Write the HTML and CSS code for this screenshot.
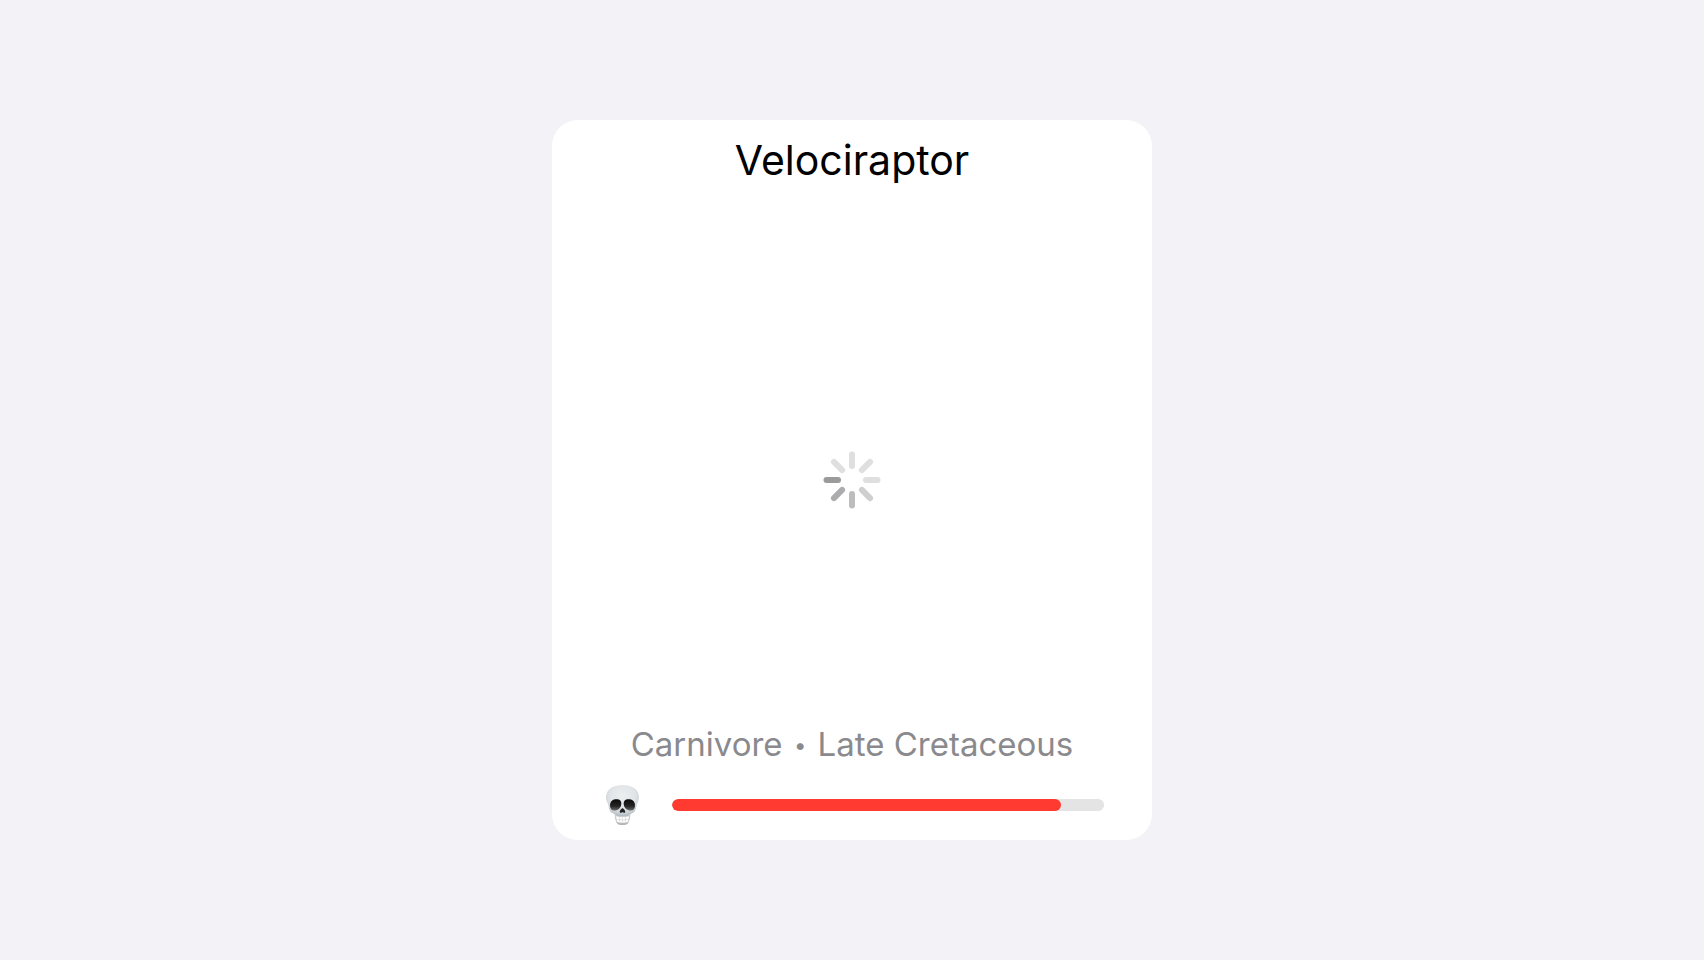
FILE: index.html
```html
<!DOCTYPE html>
<html lang="en">
<head>
<meta charset="utf-8">
<meta name="viewport" content="width=device-width, initial-scale=1">
<title>Velociraptor</title>
<link rel="stylesheet" href="styles.css">
</head>
<body>
<main class="page">
  <article class="card">
    <h1 class="title">Velociraptor</h1>
    <div class="media" role="status" aria-label="Loading">
      <svg class="spinner" viewBox="-30 -30 60 60" aria-hidden="true">
        <g stroke-width="6" stroke-linecap="round">
          <path d="M0-14V-25.500" stroke="#dfdfdf"/>
          <path d="M0-14V-25.500" stroke="#dfdfdf" transform="rotate(45)"/>
          <path d="M0-14V-25.500" stroke="#dfdfdf" transform="rotate(90)"/>
          <path d="M0-14V-25.500" stroke="#cfcfd0" transform="rotate(135)"/>
          <path d="M0-14V-25.500" stroke="#bdbdbe" transform="rotate(180)"/>
          <path d="M0-14V-25.500" stroke="#acacae" transform="rotate(225)"/>
          <path d="M0-14V-25.500" stroke="#9b9b9d" transform="rotate(270)"/>
          <path d="M0-14V-25.500" stroke="#dfdfdf" transform="rotate(315)"/>
        </g>
      </svg>
    </div>
    <p class="facts">Carnivore <span class="dot">•</span> Late Cretaceous</p>
    <div class="danger">
      <svg class="skull" viewBox="0 0 36 42" aria-hidden="true">
        <defs>
          <radialGradient id="bone" cx=".5" cy=".35" r=".68">
            <stop offset="0" stop-color="#eceeef"/>
            <stop offset=".55" stop-color="#e1e5e8"/>
            <stop offset=".82" stop-color="#ccd3d7"/>
            <stop offset="1" stop-color="#a9b3b9"/>
          </radialGradient>
          <linearGradient id="jaw" x1="0" y1="0" x2="0" y2="1">
            <stop offset="0" stop-color="#dcdcdc"/>
            <stop offset="1" stop-color="#b4b4b4"/>
          </linearGradient>
          <linearGradient id="socket" x1="0" y1="0" x2="0" y2="1">
            <stop offset="0" stop-color="#0c0c0c"/>
            <stop offset=".6" stop-color="#242424"/>
            <stop offset="1" stop-color="#686868"/>
          </linearGradient>
        </defs>
        <path d="M10 28C10 32 10.500 35 11.500 37.500C12.500 40.700 15 41 18 41S23.500 40.700 24.500 37.500C25.500 35 26 32 26 28Z" fill="url(#jaw)"/>
        <path d="M18 1C7.500 1 1.500 6 1.500 13.500C1.500 17 3.500 19 4 22C4.500 26 6 28.500 9 29.500C11 30.200 12 32 14 32H22C24 32 25 30.200 27 29.500C30 28.500 31.500 26 32 22C32.500 19 34.500 17 34.500 13.500C34.500 6 28.500 1 18 1Z" fill="url(#bone)"/>
        <path d="M5.500 21.500C5.500 17 8.500 15.200 12 15.200C15.500 15.200 17 17 16.800 20C16.500 24 13.500 26.500 10 26.500C7 26.500 5.500 24.500 5.500 21.500Z" fill="url(#socket)"/>
        <path d="M30.500 21.500C30.500 17 27.500 15.200 24 15.200C20.500 15.200 19 17 19.200 20C19.500 24 22.500 26.500 26 26.500C29 26.500 30.500 24.500 30.500 21.500Z" fill="url(#socket)"/>
        <path d="M18 24.200C17 24.200 14.800 27 15.300 28.300C15.800 29.200 17.200 28.800 18 28.300C18.800 28.800 20.200 29.200 20.700 28.300C21.200 27 19 24.200 18 24.200Z" fill="#222"/>
        <path d="M11.500 32.300Q18 34 24.500 32.300L23.500 38Q18 39.300 12.500 38Z" fill="#fff"/>
        <path d="M12 35.400Q18 36.500 24 35.400M15 33V38M18 33.500V38.500M21 33V38" fill="none" stroke="#c8c8c8" stroke-width=".5"/>
      </svg>
      <progress class="meter" value="90" max="100" aria-label="Danger level"></progress>
    </div>
  </article>
</main>
</body>
</html>
```
FILE: styles.css
```css
* {
  box-sizing: border-box;
}

body {
  margin: 0;
  background: #f2f2f7;
  color: #000;
  font-family: Inter, "Liberation Sans", sans-serif;
}

.page {
  display: flex;
  flex-direction: column;
  align-items: center;
  justify-content: center;
  min-height: 100vh;
}

.card {
  display: flex;
  flex-direction: column;
  width: 100%;
  max-width: 600px;
  min-height: 75vh;
  padding: 16px 48px 14px;
  border-radius: 26px;
  background: #fff;
}

.title {
  margin: 0;
  font-size: 41px;
  font-weight: 400;
  line-height: 48px;
  text-align: center;
}

.media {
  display: flex;
  flex: 1;
  align-items: center;
  justify-content: center;
  padding-top: 52px;
}

.spinner {
  width: 60px;
  height: 60px;
}

.facts {
  margin: 0 0 20px;
  color: #8a8a8e;
  font-size: 33px;
  line-height: 40px;
  text-align: center;
}

.dot {
  margin: 0 2px;
  font-size: 22px;
  line-height: 1;
  vertical-align: 3px;
}

.danger {
  display: flex;
  align-items: center;
  gap: 27px;
}

.skull {
  width: 45px;
  height: 42px;
}

.meter {
  flex: 1;
  min-width: 0;
  height: 12px;
  border: 0;
  border-radius: 6px;
  background: #e4e4e4;
  overflow: hidden;
  appearance: none;
}

.meter::-webkit-progress-bar {
  border-radius: 6px;
  background: #e4e4e4;
}

.meter::-webkit-progress-value {
  border-radius: 6px;
  background: #ff3a30;
}
```
